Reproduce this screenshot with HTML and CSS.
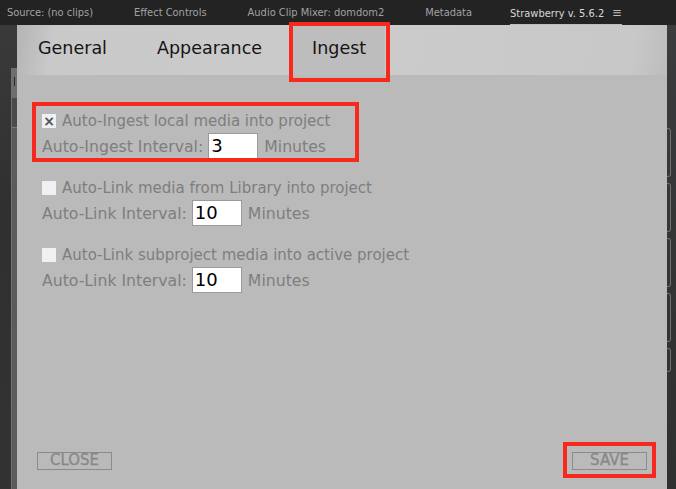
FILE: index.html
```html
<!DOCTYPE html>
<html>
<head>
<meta charset="utf-8">
<link rel="stylesheet" href="styles.css">
</head>
<body>
<div class="topbar">
  <span class="ptab">Source: (no clips)</span>
  <span class="ptab">Effect Controls</span>
  <span class="ptab">Audio Clip Mixer: domdom2</span>
  <span class="ptab">Metadata</span>
  <span class="ptab active">Strawberry v. 5.6.2 <span class="menu">&#8801;</span></span>
</div>
<div class="main">
  <div class="left-strip">
    <div class="edge">
      <div class="edge-head"><span class="tick"></span></div>
      <div class="edge-mid"></div>
      <div class="edge-body"></div>
    </div>
  </div>
  <div class="dialog">
    <div class="tabs">
      <div class="tab">General</div>
      <div class="tab">Appearance</div>
      <div class="tab selected">Ingest</div>
    </div>
    <div class="content">
      <div class="group">
        <div class="check-row"><span class="checkbox checked">&#215;</span>Auto-Ingest local media into project</div>
        <div class="interval-row">Auto-Ingest Interval:<span class="num">3</span>Minutes</div>
      </div>
      <div class="group">
        <div class="check-row"><span class="checkbox"></span>Auto-Link media from Library into project</div>
        <div class="interval-row">Auto-Link Interval:<span class="num">10</span>Minutes</div>
      </div>
      <div class="group">
        <div class="check-row"><span class="checkbox"></span>Auto-Link subproject media into active project</div>
        <div class="interval-row">Auto-Link Interval:<span class="num">10</span>Minutes</div>
      </div>
    </div>
    <div class="footer">
      <div class="btn">CLOSE</div>
      <div class="btn">SAVE</div>
    </div>
    <div class="mark mark-tab"></div>
    <div class="mark mark-group"></div>
    <div class="mark mark-save"></div>
  </div>
  <div class="right-strip">
    <div class="rbox"></div>
    <div class="rbox"></div>
    <div class="rbox"></div>
    <div class="rbox"></div>
    <div class="rbox short"></div>
  </div>
</div>
</body>
</html>
```
FILE: styles.css
```css
* { box-sizing: border-box; }
html, body { margin: 0; padding: 0; }
body {
  width: 676px;
  height: 489px;
  overflow: hidden;
  background: #2f3031;
  font-family: "DejaVu Sans", sans-serif;
}
.topbar {
  height: 25px;
  background: #232323;
  display: flex;
  align-items: center;
  gap: 41px;
  padding-left: 7px;
  font-family: "DejaVu Sans Condensed", "Liberation Sans Narrow", "Open Sans", sans-serif;
  font-stretch: condensed;
  font-size: 11px;
  color: #a2a2a2;
  white-space: nowrap;
}
.ptab { line-height: 25px; }
.ptab.active {
  color: #d8d8d8;
  border-bottom: 2px solid #bdbdbd;
  line-height: 21px;
  padding-top: 2px;
  margin-left: -3px;
}
.menu { margin-left: 5px; color: #bbb; font-size: 13px; }
.main {
  display: flex;
  height: 464px;
}
.left-strip {
  width: 17px;
  background: linear-gradient(160deg, #3a3a3a 0%, #303030 40%, #333 100%);
  display: flex;
  justify-content: flex-end;
}
.edge {
  width: 6px;
  display: flex;
  flex-direction: column;
  margin-top: 43px;
  border-left: 1px solid #707070;
}
.edge-head {
  height: 30px;
  background: #6e6e6e;
  position: relative;
}
.tick {
  position: absolute;
  left: 2px;
  top: 9px;
  width: 1px;
  height: 9px;
  background: #2a2a2a;
}
.edge-mid { height: 30px; background: #4a4a4a; border-bottom: 1px solid #787878; }
.edge-body { flex: 1; background: #5b5b5b; }
.dialog {
  width: 650px;
  position: relative;
  display: flex;
  flex-direction: column;
  background: #bababa;
}
.tabs {
  height: 50px;
  display: flex;
  gap: 8px;
  background: linear-gradient(100deg, #b4b4b4 0%, #c9c9c9 6%, #cbcbcb 60%, #c8c8c8 94%, #bdbdbd 100%);
}
.tab {
  padding: 0 21px;
  font-size: 17.5px;
  color: #151515;
  line-height: 47px;
}
.tab.selected { background: #bdbdbd; margin-left: -2px; padding: 0 19px 0 23px; }
.content {
  padding: 36px 0 0 25px;
  display: flex;
  flex-direction: column;
  gap: 19px;
}
.group { display: flex; flex-direction: column; gap: 2px; }
.check-row {
  height: 20px;
  display: flex;
  align-items: center;
  font-size: 15px;
  color: #7e7e7e;
}
.checkbox {
  width: 14px;
  height: 14px;
  background: #eef0f4;
  margin-right: 6px;
  font-size: 14px;
  line-height: 14px;
  text-align: center;
  color: #555;
  font-weight: bold;
}
.interval-row {
  height: 26px;
  display: flex;
  align-items: center;
  font-size: 15.7px;
  color: #7e7e7e;
}
.num {
  width: 50px;
  height: 26px;
  margin: 0 6px 0 5px;
  background: #fff;
  border: 1px solid #999;
  padding-left: 2px;
  font-size: 18px;
  line-height: 24px;
  color: #000;
}
.footer {
  margin-top: auto;
  display: flex;
  justify-content: space-between;
  padding: 0 20px 19px;
}
.btn {
  width: 75px;
  height: 18px;
  border: 1.5px solid #8b8b8b;
  color: #888;
  font-size: 15px;
  line-height: 15px;
  text-align: center;
  -webkit-text-stroke: 0.3px #888;
}
.mark {
  position: absolute;
  border: 4px solid #f7291f;
}
.mark-tab { left: 272px; top: -3px; width: 101px; height: 60px; }
.mark-group { left: 15px; top: 77px; width: 327px; height: 60px; }
.mark-save { left: 546px; top: 417px; width: 93px; height: 36px; }
.right-strip {
  width: 9px;
  background: linear-gradient(200deg, #3a3c3e 0%, #333 60%, #2f3030 100%);
  display: flex;
  flex-direction: column;
  gap: 6px;
  padding-top: 103px;
}
.rbox {
  width: 4px;
  height: 49px;
  border: 1px solid #6f7070;
  border-left: none;
  border-radius: 0 3px 3px 0;
}
.rbox.short { height: 24px; }
```
